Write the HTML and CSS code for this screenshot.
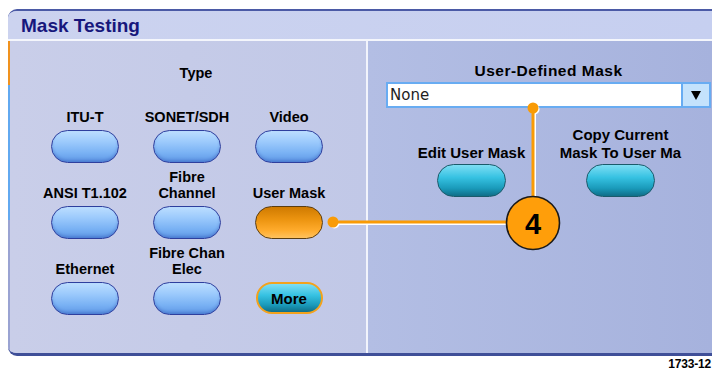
FILE: index.html
```html
<!DOCTYPE html>
<html>
<head>
<meta charset="utf-8">
<link rel="stylesheet" href="styles.css">
</head>
<body>
<div class="page">
  <div class="frame">
    <div class="titlebar">Mask Testing</div>
    <div class="body">
      <div class="strip">
        <div class="seg seg-orange"></div>
        <div class="seg seg-blue"></div>
        <div class="seg seg-rest"></div>
      </div>
      <div class="left">
        <div class="heading">Type</div>
        <div class="grid">
          <div class="cell"><div class="label">ITU-T</div><div class="btn blue"></div></div>
          <div class="cell"><div class="label">SONET/SDH</div><div class="btn blue"></div></div>
          <div class="cell"><div class="label">Video</div><div class="btn blue"></div></div>
          <div class="cell"><div class="label">ANSI T1.102</div><div class="btn blue"></div></div>
          <div class="cell"><div class="label">Fibre<br>Channel</div><div class="btn blue"></div></div>
          <div class="cell"><div class="label">User Mask</div><div class="btn orange"></div></div>
          <div class="cell"><div class="label">Ethernet</div><div class="btn blue"></div></div>
          <div class="cell"><div class="label">Fibre Chan<br>Elec</div><div class="btn blue"></div></div>
          <div class="cell"><div class="label"></div><div class="btn teal more">More</div></div>
        </div>
      </div>
      <div class="divider"></div>
      <div class="right">
        <div class="rheading">User-Defined Mask</div>
        <div class="dropdown">
          <div class="dd-text">None</div>
          <div class="dd-arrow"><span class="tri"></span></div>
        </div>
        <div class="rgrid">
          <div class="rcell"><div class="rlabel">Edit User Mask</div><div class="btn teal"></div></div>
          <div class="rcell"><div class="rlabel">Copy Current<br>Mask To User Ma</div><div class="btn teal"></div></div>
        </div>
      </div>
    </div>
  </div>
  <div class="figno">1733-12</div>
  <svg class="callout" width="712" height="371" viewBox="0 0 712 371">
    <g stroke="#ffffff" stroke-width="3" fill="none">
      <line x1="534.5" y1="109.5" x2="534.5" y2="197"/>
      <line x1="334.5" y1="223.5" x2="507" y2="223.5"/>
    </g>
    <circle cx="534.5" cy="109.5" r="5" fill="#ffffff"/>
    <circle cx="334.5" cy="223.5" r="5" fill="#ffffff"/>
    <g stroke="#f99b06" stroke-width="3" fill="none">
      <line x1="533" y1="108" x2="533" y2="197"/>
      <line x1="333" y1="222" x2="507" y2="222"/>
    </g>
    <circle cx="533" cy="108" r="5.5" fill="#f99b06"/>
    <circle cx="333" cy="222" r="5.5" fill="#f99b06"/>
    <circle cx="533" cy="223" r="26.5" fill="#ff9e0a" stroke="#1a1a1a" stroke-width="1.6"/>
    <text x="533" y="234" text-anchor="middle" class="num">4</text>
  </svg>
</div>
</body>
</html>
```

FILE: styles.css
```css
html, body {
  margin: 0;
  padding: 0;
  background: #ffffff;
}

.page {
  position: relative;
  width: 712px;
  height: 371px;
  overflow: hidden;
  font-family: "Liberation Sans", Arial, sans-serif;
}

.frame {
  margin: 9px 0 0 8px;
  width: 704px;
  border-top: 2px solid #4b5aa6;
  border-bottom: 3px solid #3f4f98;
  border-radius: 9px 0 0 9px;
  overflow: hidden;
  background: #c6cce8;
}

.titlebar {
  height: 26px;
  padding: 2px 0 0 13px;
  border-bottom: 2px solid #f4f6fc;
  background: linear-gradient(to right, #ccd3ef, #c6cff0);
  color: #17177c;
  font-weight: bold;
  font-size: 19px;
  line-height: 26px;
}

.body {
  display: flex;
  height: 312px;
}

.strip {
  width: 2px;
  display: flex;
  flex-direction: column;
}

.seg-orange {
  height: 44px;
  background: #f0921e;
}

.seg-blue {
  height: 135px;
  background: #62a9f0;
}

.seg-rest {
  flex: 1;
  background: #9aa3d2;
}

.left {
  width: 356px;
  background: linear-gradient(to right, #c9cee9, #c1c8e7);
}

.heading {
  padding: 24px 0 0 16px;
  height: 16px;
  line-height: 16px;
  text-align: center;
  font-weight: bold;
  font-size: 14.5px;
  color: #000;
}

.grid {
  margin: 12px 0 0 24px;
  display: grid;
  grid-template-columns: 102px 102px 102px;
  row-gap: 6px;
}

.cell {
  display: flex;
  flex-direction: column;
  align-items: center;
}

.label {
  height: 32px;
  display: flex;
  align-items: flex-end;
  justify-content: center;
  text-align: center;
  line-height: 16px;
  font-weight: bold;
  font-size: 14.5px;
  color: #000;
  margin-bottom: 5px;
}

.btn {
  box-sizing: border-box;
  width: 68px;
  height: 33px;
  border-radius: 17px;
}

.blue {
  border: 1.5px solid #2e3f9e;
  background: linear-gradient(to bottom, #bcdeff 0%, #9ccafc 35%, #7ab2f4 70%, #5f98e6 100%);
  box-shadow: inset 0 -2px 3px rgba(30, 60, 160, 0.3);
}

.orange {
  border: 1.5px solid #5b3d10;
  background: linear-gradient(to bottom, #cf7a00 0%, #ec9410 40%, #ffab2c 75%, #ffc25e 100%);
}

.teal {
  border: 1.5px solid #1b5a6a;
  background: linear-gradient(to bottom, #7edef4 0%, #36c2e2 40%, #1a9aba 75%, #0f6e88 100%);
}

.more {
  border: 2px solid #f3a21c;
  height: 32px;
  width: 67px;
  display: flex;
  align-items: center;
  justify-content: center;
  font-weight: bold;
  font-size: 15px;
  color: #000;
}

.divider {
  width: 2px;
  background: #f2f4fc;
}

.right {
  flex: 1;
  padding: 22px 1px 0 18px;
  background: linear-gradient(to right, #b3bee4, #a6b2dd);
}

.rheading {
  width: 325px;
  height: 16px;
  line-height: 16px;
  text-align: center;
  font-weight: bold;
  font-size: 15.5px;
  letter-spacing: 0.5px;
  color: #000;
}

.dropdown {
  margin-top: 3px;
  box-sizing: border-box;
  width: 325px;
  height: 26px;
  border: 2px solid #68acf2;
  background: #ffffff;
  display: flex;
}

.dd-text {
  flex: 1;
  padding-left: 2px;
  font-family: "DejaVu Sans", sans-serif;
  font-size: 15px;
  line-height: 22px;
  color: #1e1e1e;
}

.dd-arrow {
  width: 26px;
  border-left: 2px solid #68acf2;
  background: #c4e2fc;
  display: flex;
  align-items: center;
  justify-content: center;
}

.tri {
  width: 0;
  height: 0;
  border-left: 5px solid transparent;
  border-right: 5px solid transparent;
  border-top: 9px solid #000;
}

.rgrid {
  margin: 18px 0 0 11px;
  display: grid;
  grid-template-columns: 149px 149px;
}

.rcell {
  display: flex;
  flex-direction: column;
  align-items: center;
}

.rlabel {
  height: 36px;
  display: flex;
  align-items: flex-end;
  justify-content: center;
  text-align: center;
  line-height: 18px;
  font-weight: bold;
  font-size: 15px;
  color: #000;
  margin-bottom: 2px;
  white-space: nowrap;
}

.rcell .btn {
  width: 69px;
}

.figno {
  margin-top: 3px;
  padding-right: 1px;
  text-align: right;
  font-weight: bold;
  font-size: 12px;
  line-height: 11px;
  height: 11px;
  letter-spacing: -0.2px;
  color: #000;
}

.callout {
  position: absolute;
  left: 0;
  top: 0;
  pointer-events: none;
}

.num {
  font-family: "Liberation Sans", Arial, sans-serif;
  font-weight: bold;
  font-size: 29px;
  fill: #000;
}
```
